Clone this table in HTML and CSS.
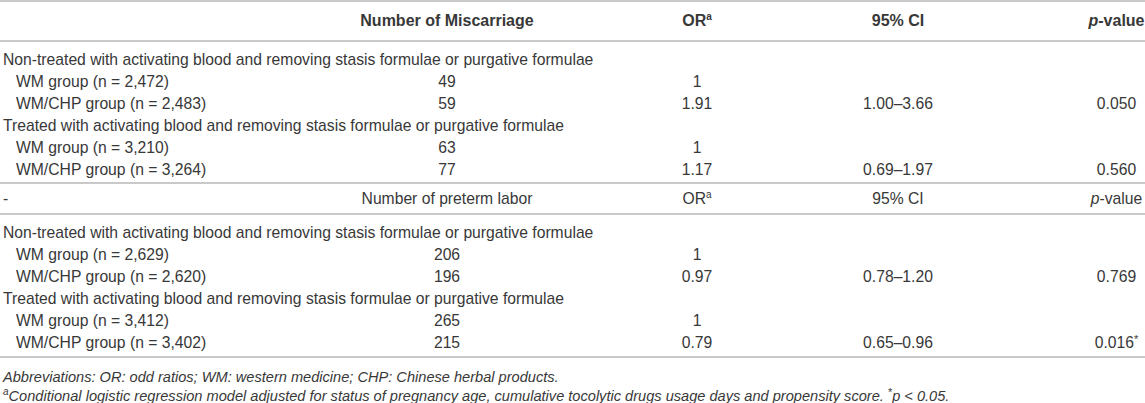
FILE: index.html
```html
<!DOCTYPE html>
<html>
<head>
<meta charset="utf-8">
<link rel="stylesheet" href="styles.css">
</head>
<body>
<div class="wrap">
<table class="tbl">
  <colgroup>
    <col class="c1"><col class="c2"><col class="c3"><col class="c4"><col class="c5">
  </colgroup>
  <thead>
    <tr class="head">
      <th class="lbl"></th>
      <th>Number of Miscarriage</th>
      <th>OR<sup>a</sup></th>
      <th>95% CI</th>
      <th class="pv"><i>p</i>-value</th>
    </tr>
  </thead>
  <tbody class="blk">
    <tr class="grp first"><td colspan="5">Non-treated with activating blood and removing stasis formulae or purgative formulae</td></tr>
    <tr><td class="lbl ind">WM group (n = 2,472)</td><td>49</td><td>1</td><td></td><td class="pv"></td></tr>
    <tr><td class="lbl ind">WM/CHP group (n = 2,483)</td><td>59</td><td>1.91</td><td>1.00–3.66</td><td class="pv">0.050</td></tr>
    <tr class="grp"><td colspan="5">Treated with activating blood and removing stasis formulae or purgative formulae</td></tr>
    <tr><td class="lbl ind">WM group (n = 3,210)</td><td>63</td><td>1</td><td></td><td class="pv"></td></tr>
    <tr class="last"><td class="lbl ind">WM/CHP group (n = 3,264)</td><td>77</td><td>1.17</td><td>0.69–1.97</td><td class="pv">0.560</td></tr>
  </tbody>
  <tbody class="sub">
    <tr class="head2">
      <td class="lbl">-</td>
      <td>Number of preterm labor</td>
      <td>OR<sup>a</sup></td>
      <td>95% CI</td>
      <td class="pv"><i>p</i>-value</td>
    </tr>
  </tbody>
  <tbody class="blk end">
    <tr class="grp first"><td colspan="5">Non-treated with activating blood and removing stasis formulae or purgative formulae</td></tr>
    <tr><td class="lbl ind">WM group (n = 2,629)</td><td>206</td><td>1</td><td></td><td class="pv"></td></tr>
    <tr><td class="lbl ind">WM/CHP group (n = 2,620)</td><td>196</td><td>0.97</td><td>0.78–1.20</td><td class="pv">0.769</td></tr>
    <tr class="grp"><td colspan="5">Treated with activating blood and removing stasis formulae or purgative formulae</td></tr>
    <tr><td class="lbl ind">WM group (n = 3,412)</td><td>265</td><td>1</td><td></td><td class="pv"></td></tr>
    <tr class="last"><td class="lbl ind">WM/CHP group (n = 3,402)</td><td>215</td><td>0.79</td><td>0.65–0.96</td><td class="pv">0.016<sup class="ast">*</sup></td></tr>
  </tbody>
</table>
<div class="notes">
  <p>Abbreviations: OR: odd ratios; WM: western medicine; CHP: Chinese herbal products.</p>
  <p><sup>a</sup>Conditional logistic regression model adjusted for status of pregnancy age, cumulative tocolytic drugs usage days and propensity score. <span class="up">*</span>p &lt; 0.05.</p>
</div>
</div>
</body>
</html>
```

FILE: styles.css
```css
html, body {
  margin: 0;
  padding: 0;
  background: #ffffff;
}

body {
  font-family: "Liberation Sans", Arial, sans-serif;
  color: #383838;
  font-size: 15.7px;
}

.wrap {
  width: 1145px;
}

.tbl {
  width: 1145px;
  border-collapse: collapse;
  table-layout: fixed;
}

.c1 { width: 345px; }
.c2 { width: 204px; }
.c3 { width: 296px; }
.c4 { width: 106px; }
.c5 { width: 194px; }

.tbl th,
.tbl td {
  padding: 0;
  text-align: center;
  white-space: nowrap;
  font-weight: normal;
  line-height: 22px;
  height: 22px;
}

.tbl .lbl {
  text-align: left;
  padding-left: 3px;
}

.tbl .ind {
  padding-left: 16px;
}

.tbl .pv {
  padding-left: 137px;
}

.tbl .grp td {
  text-align: left;
  padding-left: 3px;
  overflow: visible;
}

.head th {
  font-weight: bold;
  font-size: 16px;
  height: 38px;
  border-top: 2px solid #c9c9c9;
  border-bottom: 2px solid #c9c9c9;
}

.blk .first td {
  padding-top: 7px;
}

.blk .last td {
  padding-bottom: 1px;
}

.end .first td {
  padding-top: 7px;
}

.end .last td {
  padding-bottom: 2px;
}

.head2 td {
  height: 29px;
  border-top: 2px solid #c9c9c9;
  border-bottom: 2px solid #c9c9c9;
}

.end .last td {
  border-bottom: 2px solid #c9c9c9;
}

sup {
  font-size: 10px;
  line-height: 0;
  vertical-align: 6px;
}

.ast {
  font-size: 11px;
  vertical-align: 5px;
}

.notes {
  padding: 10px 0 0 3px;
  font-style: italic;
  font-size: 14.6px;
}

.notes p {
  margin: 0;
  line-height: 19px;
}

.notes .up {
  font-style: normal;
  font-size: 11px;
  vertical-align: 5px;
  line-height: 0;
}
```
